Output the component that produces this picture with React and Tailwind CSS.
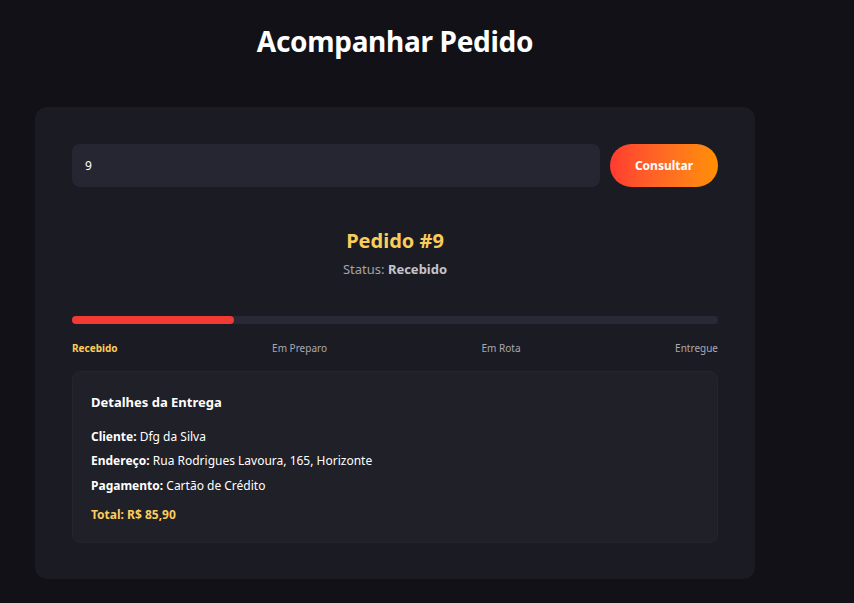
export default function App() {
  const steps = ["Recebido", "Em Preparo", "Em Rota", "Entregue"];
  return (
    <div className="min-h-[603px] bg-[#111117] text-white" style={{ fontFamily: '"Noto Sans", "Open Sans", sans-serif' }}>
      <div className="ml-[35px] w-[720px] pt-[22px] pb-6">
        <h1 className="text-center text-[28px] font-bold leading-[38px] tracking-[-0.3px]">Acompanhar Pedido</h1>
        <div className="mt-[47px] rounded-xl bg-[#1b1c23] px-[37px] pt-[37px] pb-[36px]">
          <div className="flex gap-[10px]">
            <div className="flex h-[43px] flex-1 items-center rounded-lg bg-[#262633] px-[13px] text-[12px] text-white">9</div>
            <button className="h-[43px] w-[108px] rounded-full bg-gradient-to-r from-[#ff3a2f] to-[#ff8f00] text-[12px] font-bold text-white">Consultar</button>
          </div>
          <div className="mt-[40px] text-center">
            <div className="text-[20px] font-bold leading-7 text-[#fccc5a]">Pedido #9</div>
            <div className="mt-[5px] text-[13px] text-[#a3a3ab]">Status: <span className="font-bold text-[#c4c4cc]">Recebido</span></div>
          </div>
          <div className="mt-[36px] h-[8px] w-full rounded-full bg-[#282935]">
            <div className="h-full w-1/4 rounded-full bg-[#f03a33]" />
          </div>
          <div className="mt-[17px] flex justify-between text-[10px] leading-[14px]">
            {steps.map((s, i) => (
              <span key={s} className={i === 0 ? "font-bold text-[#fccc5a]" : "text-[#a9a9b1]"}>{s}</span>
            ))}
          </div>
          <div className="mt-[16px] rounded-lg border border-[#24252d] bg-[#1f2028] px-[18px] pt-[20px] pb-[19px] text-[12px]">
            <div className="text-[13px] font-bold leading-[20px]">Detalhes da Entrega</div>
            <div className="mt-[16px] space-y-[7.5px] leading-[17px]">
              <div><span className="font-bold">Cliente:</span> Dfg da Silva</div>
              <div><span className="font-bold">Endereço:</span> Rua Rodrigues Lavoura, 165, Horizonte</div>
              <div><span className="font-bold">Pagamento:</span> Cartão de Crédito</div>
            </div>
            <div className="mt-[12px] font-bold leading-[17px] text-[#fccc5a]">Total: R$ 85,90</div>
          </div>
        </div>
      </div>
    </div>
  );
}
